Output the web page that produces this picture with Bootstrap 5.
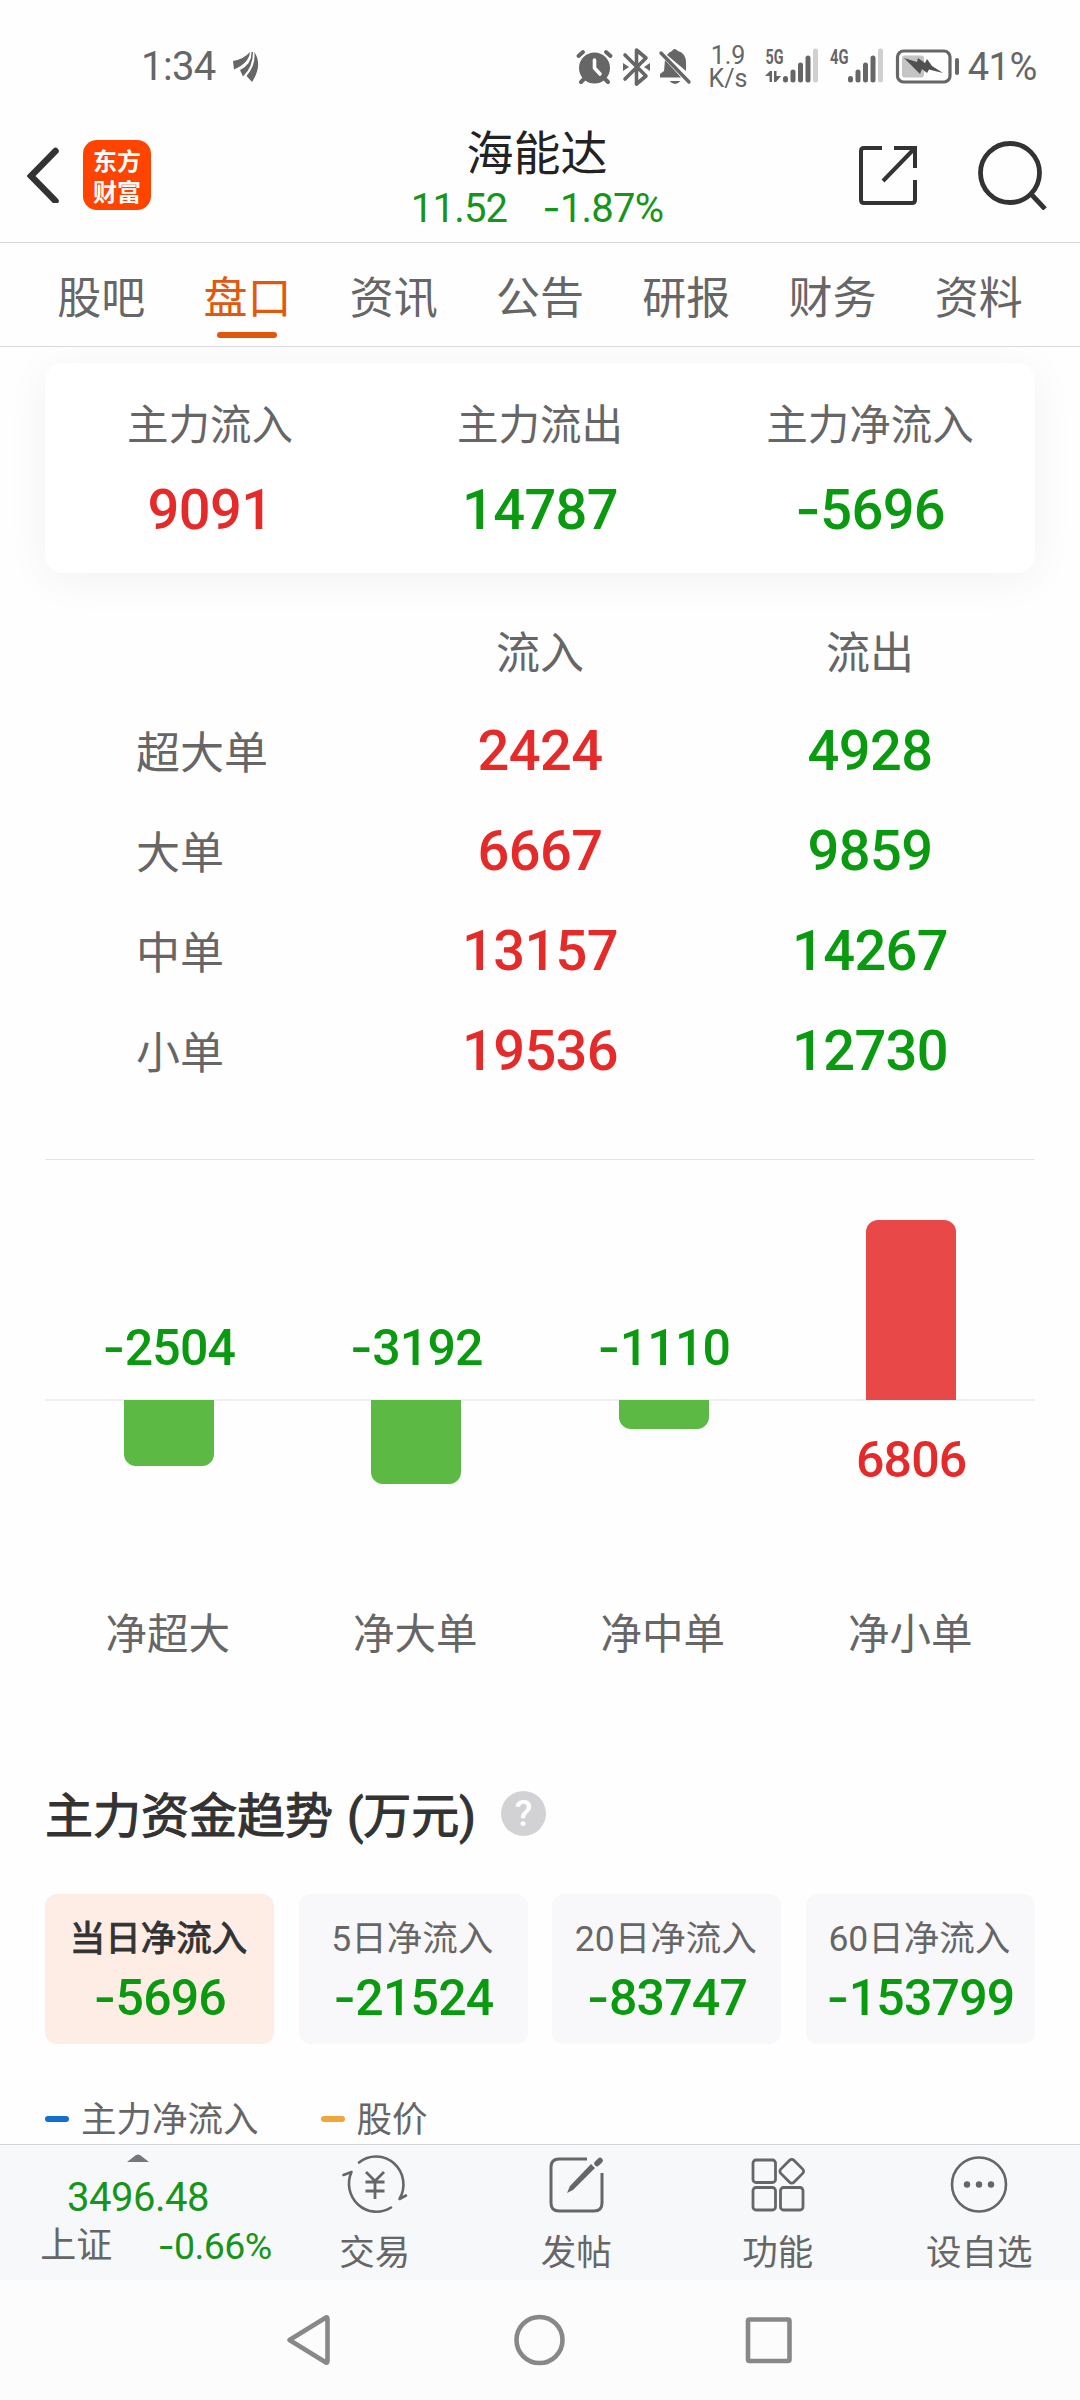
<!DOCTYPE html>
<html lang="zh-CN">
<head>
<meta charset="utf-8">
<meta name="viewport" content="width=device-width, initial-scale=1">
<title>海能达</title>
<link href="https://cdn.jsdelivr.net/npm/bootstrap@5.3.0/dist/css/bootstrap.min.css" rel="stylesheet">
<style>
  html, body { overflow: hidden; }
  body { width: 1080px; height: 2400px; font-family: Roboto, "Noto Sans CJK SC", sans-serif; color: #666; background: #fefefe; line-height: 1; }
  svg { display: block; flex: none; }
  i { font-family: Inter, sans-serif; font-style: normal; line-height: 1; }
  .up { color: #e52a2a; }
  .down { color: #0a9a0f; }

  .statusbar { height: 107px; padding: 24px 43px 0 141px; }
  .status-side { height: 86px; }
  .clock { font-size: 40px; letter-spacing: -.6px; }
  .battery-text { font-size: 38px; margin-left: 7px; letter-spacing: -.4px; }

  .titlebar { height: 136px; border-bottom: 1px solid #d5d5d5; padding: 0 33px 0 27px; }
  .app-logo { width: 68px; height: 70px; border-radius: 14px; background: #ff4400; color: #fff; font-family: "Noto Sans CJK SC", sans-serif; font-weight: 700; font-size: 24px; padding-top: 4px; margin-left: 22px; }
  .app-logo div { line-height: 31px; }
  .side { width: 300px; }
  .share { margin-right: 59px; }
  .stock-name { font-size: 47px; line-height: 56px; color: #222; padding-top: 10px; }
  .quote { font-size: 40px; line-height: 48px; gap: 35px; letter-spacing: -.8px; color: #17951a; margin-top: 3px; }

  .tabs { height: 104px; border-bottom: 1px solid #d9d9d9; padding: 0 28px; font-size: 44px; }
  .tabs > a { flex: 1; color: #666; text-decoration: none; padding-top: 34px; }
  .tabs > a.active { color: #e0590c; }
  .tabs > a.active::after { content: ""; width: 60px; height: 6px; border-radius: 3px; background: #e2560a; margin-top: 11px; }

  .content { height: 1797px; padding: 16px 45px 0; overflow: hidden; }
  .summary { height: 210px; border-radius: 18px; background: #fff; box-shadow: 0 6px 44px rgba(0,0,0,.055); }
  .summary .lbl { font-size: 41.5px; line-height: 50px; margin-top: 38px; }
  .big { font-size: 56px; font-weight: 500; letter-spacing: -.6px; line-height: 60px; }
  .summary .big { margin-top: 29px; }

  .orders { margin-top: 30px; font-size: 44px; }
  .orders .line { height: 100px; }
  .orders .line > div { padding-top: 2px; }
  .orders .line > .big { padding: 0 0 4px; }
  .orders .kind { padding-left: 91px; }
  .divider { height: 1px; background: #e3e3e3; margin-top: 56px; }

  .chart { margin-top: 60px; }
  .chart .above { height: 181px; border-bottom: 2px solid #efefef; }
  .chart .above .val { margin-bottom: 23px; }
  .chart .below { height: 209px; }
  .chart .below .val { margin-top: 31px; }
  .val { font-size: 50px; font-weight: 500; letter-spacing: -.8px; line-height: 56px; }
  .bar { width: 90px; flex: none; }
  .bar.neg { background: #5bb944; border-radius: 0 0 12px 12px; margin-top: -1px; }
  .bar.pos { background: #e94848; border-radius: 12px 12px 0 0; margin-bottom: -1px; }
  .axis-name { font-size: 41.5px; line-height: 50px; margin-left: -2px; }

  .trend-title { margin-top: 129px; font-size: 48px; line-height: 56px; font-weight: 400; -webkit-text-stroke: 1.1px #333; color: #333; gap: 25px; word-spacing: 2px; }
  .help { width: 45px; height: 45px; border-radius: 50%; background: #d2d2d5; color: #fff; font-size: 36px; font-weight: 500; line-height: 47px; text-align: center; margin-top: -7px; -webkit-text-stroke: 0; }
  .periods { margin-top: 49px; gap: 24.4px; }
  .period { flex: 1 1 0; height: 150px; border-radius: 12px; background: #f8f8fa; font-size: 35.5px; }
  .period .cap-line { line-height: 42px; margin-top: 24px; margin-left: -2px; }
  .period .val { margin-top: 10px; }
  .period.active { background: #feede5; }
  .period.active .cap-line { color: #333; -webkit-text-stroke: 1px #333; }
  .legend-row { margin-top: 51px; font-size: 35.5px; line-height: 44px; }
  .legend-row span { padding-top: 3px; }
  .dash { width: 24px; height: 6px; border-radius: 3px; margin-right: 12px; }
  .dash.flow { background: #156fd0; }
  .dash.price { background: #efa73a; margin-left: 62px; }

  .toolbar { height: 136px; border-top: 1px solid #d2d4da; background: #f7f8fa; font-size: 35.5px; }
  .index-box { width: 274px; padding: 9px 0 0 2px; }
  .index-box .idx { font-size: 40px; line-height: 46px; margin-top: 13px; letter-spacing: -.5px; color: #17951a; }
  .index-row { font-size: 36px; line-height: 42px; margin-top: 4px; gap: 45px; padding-left: 36px; }
  .index-row .pct { font-size: 37.5px; letter-spacing: -.6px; color: #17951a; }
  .tool { flex: 1; padding-top: 8px; }
  .tool span { margin-top: 17px; line-height: 42px; }
  .sysnav { height: 120px; background: #fcfcfc; }
</style>
</head>
<body class="d-flex flex-column">

<header class="statusbar d-flex align-items-start">
  <div class="status-side d-flex align-items-center">
    <span class="clock">1:34</span>
    <svg class="ms-3" width="28" height="32" viewBox="0 0 28 32" fill="#666"><path d="M1 10Q12 8 18 1Q17 12 2 18.500Z"/><path d="M19.500 1Q20 13 8 19L11 25.500Q21 16 21 1Z"/><path d="M22.300 1Q24 14 14.500 25L20 31Q31 14 22.300 1Z"/></svg>
  </div>
  <div class="status-side ms-auto d-flex align-items-center">
    <svg width="386" height="52" viewBox="574 41 386 52" fill="#666">
      <!-- alarm -->
      <circle cx="593.5" cy="68" r="15.5"/>
      <path d="M577.5 56L582 52M609.5 56L605 52M580 82L584 78M607 82L603 78" stroke="#666" stroke-width="4" stroke-linecap="round"/>
      <path d="M593.5 60V68L599 74" fill="none" stroke="#fff" stroke-width="3.6" stroke-linecap="round" stroke-linejoin="round"/>
      <!-- bluetooth -->
      <path d="M624 55L645 76L635.500 84V50L645 58L624 79" fill="none" stroke="#666" stroke-width="3.6" stroke-linejoin="round" stroke-linecap="round"/>
      <path d="M622 63L628 67L622 71ZM649 63L643 67L649 71Z"/>
      <!-- muted bell -->
      <path d="M664 60L680 77.500H659V74L663 71ZM666 55Q668 52 671 51Q673 47 677 51Q685 53 685 63V71ZM668.500 81H679.500Q674 87 668.500 81Z"/>
      <path d="M660 53L688 82" stroke="#666" stroke-width="3.400" stroke-linecap="round"/>
      <!-- network rate -->
      <text x="727" y="64" font-size="25" text-anchor="middle">1.9</text>
      <text x="727" y="87" font-size="25" text-anchor="middle">K/s</text>
      <!-- 5G signal -->
      <text x="764.500" y="63.500" font-size="19.500" font-weight="700" textLength="18" lengthAdjust="spacingAndGlyphs">5G</text>
      <path d="M764 76L769 71H771V82H768.500V76ZM773 71H775.500V76H780L775 82H773Z"/>
      <g stroke="#666" stroke-width="5" stroke-linecap="round"><path d="M784.500 78.500V80M792 72V80M799.500 65V80M807 58V80"/><path d="M814.500 51V80" stroke="#d0d0d0"/></g>
      <!-- 4G signal -->
      <text x="829" y="63.500" font-size="19.500" font-weight="700" textLength="18.500" lengthAdjust="spacingAndGlyphs">4G</text>
      <g stroke="#666" stroke-width="5" stroke-linecap="round"><path d="M849.500 78.500V80M857 72V80M864.500 65V80M872 58V80"/><path d="M879.500 51V80" stroke="#d0d0d0"/></g>
      <!-- battery -->
      <rect x="896.500" y="51" width="52.500" height="31" rx="6" fill="none" stroke="#666" stroke-width="3.200"/>
      <rect x="901" y="55.500" width="22" height="22" rx="3" fill="#c4c4c4"/>
      <rect x="954" y="58" width="4" height="17" rx="2"/>
      <path d="M903 58L916 62L917 58L924 63L926 59L931 66L942 73L928 69.500L926 73L921 69L919 74Z" fill="#505050"/>
    </svg>
    <span class="battery-text">41%</span>
  </div>
</header>

<nav class="titlebar d-flex align-items-center">
  <div class="side d-flex align-items-center">
    <svg width="34" height="56" viewBox="0 0 34 56" fill="none" stroke="#333" stroke-width="6.500" stroke-linecap="round"><path d="M28.500 4L4 29L28.500 54"/></svg>
    <div class="app-logo text-center"><div>东方</div><div>财富</div></div>
  </div>
  <div class="flex-fill text-center">
    <div class="stock-name">海能达</div>
    <div class="quote d-flex justify-content-center">
      <span>11.52</span><span><i>-</i>1.87%</span>
    </div>
  </div>
  <div class="side d-flex align-items-center justify-content-end">
    <svg class="share" width="60" height="60" viewBox="0 0 60 60" fill="none" stroke="#333" stroke-width="4"><path d="M24 3H6Q3 3 3 6V55Q3 58 6 58H54Q57 58 57 55V35M36 3H57V23M56 4L25 36"/></svg>
    <svg width="70" height="70" viewBox="0 0 70 70" fill="none" stroke="#333" stroke-width="4.800"><circle cx="33" cy="33" r="29.500"/><path d="M54 54L68 69"/></svg>
  </div>
</nav>

<nav class="tabs d-flex">
  <a class="d-flex flex-column align-items-center">股吧</a>
  <a class="active d-flex flex-column align-items-center">盘口</a>
  <a class="d-flex flex-column align-items-center">资讯</a>
  <a class="d-flex flex-column align-items-center">公告</a>
  <a class="d-flex flex-column align-items-center">研报</a>
  <a class="d-flex flex-column align-items-center">财务</a>
  <a class="d-flex flex-column align-items-center">资料</a>
</nav>

<main class="content">
  <section class="summary row g-0 text-center">
    <div class="col-4"><div class="lbl">主力流入</div><div class="big up">9091</div></div>
    <div class="col-4"><div class="lbl">主力流出</div><div class="big down">14787</div></div>
    <div class="col-4"><div class="lbl">主力净流入</div><div class="big down"><i>-</i>5696</div></div>
  </section>

  <section class="orders">
    <div class="line row g-0 align-items-center text-center"><div class="col-4"></div><div class="col-4">流入</div><div class="col-4">流出</div></div>
    <div class="line row g-0 align-items-center text-center"><div class="col-4 kind text-start">超大单</div><div class="col-4 big up">2424</div><div class="col-4 big down">4928</div></div>
    <div class="line row g-0 align-items-center text-center"><div class="col-4 kind text-start">大单</div><div class="col-4 big up">6667</div><div class="col-4 big down">9859</div></div>
    <div class="line row g-0 align-items-center text-center"><div class="col-4 kind text-start">中单</div><div class="col-4 big up">13157</div><div class="col-4 big down">14267</div></div>
    <div class="line row g-0 align-items-center text-center"><div class="col-4 kind text-start">小单</div><div class="col-4 big up">19536</div><div class="col-4 big down">12730</div></div>
  </section>
  <div class="divider"></div>

  <section class="chart row g-0 text-center">
    <div class="col-3">
      <div class="above d-flex flex-column align-items-center justify-content-end"><div class="val down"><i>-</i>2504</div></div>
      <div class="below d-flex flex-column align-items-center"><div class="bar neg" style="height:66px"></div></div>
      <div class="axis-name">净超大</div>
    </div>
    <div class="col-3">
      <div class="above d-flex flex-column align-items-center justify-content-end"><div class="val down"><i>-</i>3192</div></div>
      <div class="below d-flex flex-column align-items-center"><div class="bar neg" style="height:84px"></div></div>
      <div class="axis-name">净大单</div>
    </div>
    <div class="col-3">
      <div class="above d-flex flex-column align-items-center justify-content-end"><div class="val down"><i>-</i>1110</div></div>
      <div class="below d-flex flex-column align-items-center"><div class="bar neg" style="height:29px"></div></div>
      <div class="axis-name">净中单</div>
    </div>
    <div class="col-3">
      <div class="above d-flex flex-column align-items-center justify-content-end"><div class="bar pos" style="height:180px"></div></div>
      <div class="below d-flex flex-column align-items-center"><div class="val up">6806</div></div>
      <div class="axis-name">净小单</div>
    </div>
  </section>

  <section>
    <div class="trend-title d-flex align-items-center"><span>主力资金趋势 (万元)</span><div class="help">?</div></div>
    <div class="periods d-flex text-center">
      <div class="period active"><div class="cap-line">当日净流入</div><div class="val down"><i>-</i>5696</div></div>
      <div class="period"><div class="cap-line">5日净流入</div><div class="val down"><i>-</i>21524</div></div>
      <div class="period"><div class="cap-line">20日净流入</div><div class="val down"><i>-</i>83747</div></div>
      <div class="period"><div class="cap-line">60日净流入</div><div class="val down"><i>-</i>153799</div></div>
    </div>
    <div class="legend-row d-flex align-items-center">
      <div class="dash flow"></div><span>主力净流入</span>
      <div class="dash price"></div><span>股价</span>
    </div>
  </section>
</main>

<footer class="toolbar d-flex">
  <div class="index-box d-flex flex-column align-items-center">
    <svg width="22" height="8" viewBox="0 0 22 8" fill="#77777b"><path d="M0 8L9 1Q11 0 13 1L22 8Z"/></svg>
    <div class="idx">3496.48</div>
    <div class="index-row d-flex align-items-center"><span>上证</span><span class="pct"><i>-</i>0.66%</span></div>
  </div>
  <div class="tool d-flex flex-column align-items-center">
    <svg width="68" height="62" viewBox="0 0 68 62" fill="none" stroke="#666" stroke-width="2.600" stroke-linecap="round" stroke-linejoin="round"><path d="M18 9.500A27.500 28 0 0 1 58.500 46L65 42.500M50 54.500A27.500 28 0 0 1 10.500 19L2.500 22"/><path d="M25 19L34 28L43 19M24.500 29H43.500M24.500 38H43.500M34 29V46" stroke-width="2.800" stroke-linecap="butt"/></svg>
    <span>交易</span>
  </div>
  <div class="tool d-flex flex-column align-items-center">
    <svg width="62" height="62" viewBox="0 0 62 62" fill="none" stroke="#666" stroke-width="3"><path d="M42 6H14Q6 6 6 14V50Q6 58 14 58H49Q57 58 57 50V20"/><path d="M22 40L25 33L46 11L50 15L28 37Z" fill="#666" stroke="none"/><path d="M52 10.500L55 7.500" stroke-width="5.500" stroke-linecap="round"/></svg>
    <span>发帖</span>
  </div>
  <div class="tool d-flex flex-column align-items-center">
    <svg width="62" height="62" viewBox="0 0 62 62" fill="none" stroke="#666" stroke-width="2.800"><rect x="6" y="7" width="22.500" height="22.500" rx="3"/><rect x="6" y="34.500" width="22.500" height="22.500" rx="3"/><rect x="33.500" y="34.500" width="22.500" height="22.500" rx="3"/><rect x="35.500" y="9" width="18.500" height="18.500" rx="3" transform="rotate(45 44.750 18.250)"/></svg>
    <span>功能</span>
  </div>
  <div class="tool d-flex flex-column align-items-center">
    <svg width="62" height="62" viewBox="0 0 62 62" fill="#666"><circle cx="31" cy="31.500" r="27" fill="none" stroke="#666" stroke-width="2.600"/><circle cx="19" cy="31.500" r="3.200"/><circle cx="31" cy="31.500" r="3.200"/><circle cx="43" cy="31.500" r="3.200"/></svg>
    <span>设自选</span>
  </div>
</footer>

<div class="sysnav d-flex align-items-center justify-content-center">
  <svg width="510" height="56" viewBox="285 2312 510 56" fill="none" stroke="#888" stroke-width="4.600" stroke-linejoin="round"><path d="M289.500 2340L326 2317.500Q327.500 2317 327.500 2319V2361Q327.500 2363 326 2362.500Z"/><circle cx="539.500" cy="2340" r="23"/><rect x="748" y="2319.500" width="41.500" height="41.500" rx="1.500"/></svg>
</div>
<script src="https://cdn.jsdelivr.net/npm/bootstrap@5.3.0/dist/js/bootstrap.bundle.min.js"></script>
</body>
</html>
